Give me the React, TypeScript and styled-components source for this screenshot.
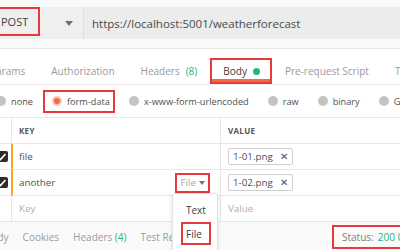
import React from 'react';
import styled, { createGlobalStyle } from 'styled-components';

const GlobalStyle = createGlobalStyle`
  html, body {
    margin: 0;
    padding: 0;
    background: #ffffff;
  }
  body {
    font-family: "Open Sans", "Liberation Sans", sans-serif;
    font-size: 10px;
    color: #505050;
  }
`;

const RED = '#e53a3f';
const GREEN = '#26b47f';
const ORANGE = '#f26b3a';

const Screen = styled.div`
  position: relative;
  width: 400px;
  height: 250px;
  overflow: hidden;
  background: #fff;
  white-space: nowrap;
`;

const TopSection = styled.div`
  padding: 7px 0 9px;
  background: #fafafa;
  border-bottom: 1px solid #e6e6e6;
`;

const RequestBar = styled.div`
  display: flex;
  height: 32px;
  background: #ececec;
`;

const MethodSelect = styled.div`
  width: 83px;
  display: flex;
  align-items: flex-start;
  justify-content: space-between;
  border-right: 1px solid #dcdcdc;
  background: #efefef;
`;

const MethodLabel = styled.span`
  margin-left: -10px;
  width: 50px;
  height: 29px;
  box-sizing: border-box;
  padding-left: 9px;
  display: flex;
  align-items: center;
  border: 2px solid ${RED};
  font-size: 11px;
  color: #404040;
`;

const Caret = styled.span`
  width: 0;
  height: 0;
  margin: 14px 10px 0 0;
  border-left: 4px solid transparent;
  border-right: 4px solid transparent;
  border-top: 5px solid #707070;
`;

const UrlInput = styled.div`
  flex: 1;
  display: flex;
  align-items: center;
  padding-left: 8px;
  font-size: 11.5px;
  color: #4a4a4a;
`;

const TabsRow = styled.div`
  display: flex;
  align-items: flex-end;
  height: 35px;
  margin-left: -23px;
  border-bottom: 1px solid #ebebeb;
`;

const Tab = styled.div<{ $active?: boolean; $marked?: boolean }>`
  display: flex;
  align-items: center;
  gap: 6px;
  height: 26px;
  box-sizing: border-box;
  padding: 0 ${({ $active }) => ($active ? 10 : 11)}px 0 11px;
  color: ${({ $active }) => ($active ? '#404040' : '#9a9a9a')};
  font-size: 10px;
  border: 2px solid ${({ $marked }) => ($marked ? RED : 'transparent')};
  box-shadow: ${({ $active }) => ($active ? `inset 0 -3px 0 ${ORANGE}` : 'none')};
`;

const Count = styled.span`
  color: ${GREEN};
`;

const Dot = styled.span`
  width: 7px;
  height: 7px;
  border-radius: 50%;
  background: ${GREEN};
`;

const RadioRow = styled.div`
  display: flex;
  align-items: center;
  height: 32px;
  margin-left: -13px;
`;

const RadioOption = styled.label<{ $marked?: boolean }>`
  display: flex;
  align-items: center;
  gap: 5px;
  height: 23px;
  box-sizing: border-box;
  padding: 0 3px 0 7px;
  margin-right: 5px;
  font-size: 9.2px;
  color: #505050;
  border: 2px solid ${({ $marked }) => ($marked ? RED : 'transparent')};
`;

const RadioDot = styled.span<{ $checked?: boolean }>`
  width: 10px;
  height: 10px;
  border-radius: 50%;
  box-sizing: border-box;
  background: ${({ $checked }) => ($checked ? ORANGE : '#c4c4c4')};
  border: ${({ $checked }) => ($checked ? '2px solid #f8c8b6' : 'none')};
`;

const Table = styled.div`
  display: grid;
  grid-template-columns: 17px 209px 1fr;
  margin-left: -6px;
  border-top: 1px solid #e6e6e6;
`;

const Cell = styled.div<{ $flag?: boolean }>`
  height: 26px;
  box-sizing: border-box;
  display: flex;
  align-items: center;
  border-bottom: 1px solid #e6e6e6;
  border-left: ${({ $flag }) => ($flag ? '2px solid #f5a623' : '1px solid #e6e6e6')};
  padding-left: ${({ $flag }) => ($flag ? '6px' : '7px')};
  font-size: 9.8px;
  color: #505050;
`;

const CheckCell = styled.div`
  height: 26px;
  box-sizing: border-box;
  display: flex;
  align-items: center;
  justify-content: center;
  border-bottom: 1px solid #e6e6e6;
`;

const HeadCell = styled(Cell)`
  font-size: 8px;
  font-weight: 700;
  letter-spacing: 0.3px;
  color: #555;
`;

const KeyCellInner = styled.div`
  flex: 1;
  display: flex;
  align-items: center;
  justify-content: space-between;
  padding-right: 10px;
`;

const Checkbox = styled.span`
  width: 11px;
  height: 11px;
  border-radius: 2px;
  background: #2c2c2c;
  display: flex;
  align-items: center;
  justify-content: center;
`;

const Placeholder = styled.span`
  color: #b0b0b0;
`;

const TypeSelect = styled.span`
  display: flex;
  align-items: center;
  gap: 3px;
  height: 20px;
  box-sizing: border-box;
  padding: 0 3px;
  border: 2px solid ${RED};
  color: #a8a8a8;
  font-size: 9.8px;
`;

const SmallCaret = styled.span`
  width: 0;
  height: 0;
  border-left: 3.5px solid transparent;
  border-right: 3.5px solid transparent;
  border-top: 4px solid #777;
`;

const FileChip = styled.span`
  display: flex;
  align-items: center;
  gap: 7px;
  height: 17px;
  box-sizing: border-box;
  padding: 0 4px;
  border: 1px solid #cfcfcf;
  border-radius: 2px;
  font-size: 9.8px;
  color: #505050;
`;

const FooterBar = styled.div`
  display: flex;
  align-items: center;
  justify-content: space-between;
  height: 29px;
  background: #fafafa;
  margin-left: -15px;
`;

const FooterTabs = styled.div`
  display: flex;
  gap: 14px;
  font-size: 10px;
  color: #9a9a9a;
`;

const StatusBox = styled.div`
  display: flex;
  align-items: center;
  gap: 4px;
  height: 24px;
  box-sizing: border-box;
  padding: 0 0 0 8px;
  width: 74px;
  margin-right: -6px;
  border: 2px solid ${RED};
  font-size: 10px;
  color: #808080;
  overflow: hidden;
`;

const Menu = styled.div`
  position: absolute;
  left: 172px;
  top: 193px;
  width: 46px;
  height: 66px;
  box-sizing: border-box;
  padding: 4px 0 0 8px;
  background: #fff;
  border: 1px solid #e2e2e2;
  border-radius: 3px;
  box-shadow: 0 1px 4px rgba(0, 0, 0, 0.12);
  display: flex;
  flex-direction: column;
  gap: 1px;
`;

const MenuItem = styled.div<{ $marked?: boolean }>`
  height: 23px;
  width: 30px;
  box-sizing: border-box;
  display: flex;
  align-items: center;
  padding-left: 3px;
  font-size: 10px;
  color: #404040;
  border: 2px solid ${({ $marked }) => ($marked ? RED : 'transparent')};
`;

const Tick = () => (
  <svg width="9" height="9" viewBox="0 0 9 9">
    <path d="M1.5 6.5 L2.5 7.5 L7.5 2" stroke="#fff" strokeWidth="1.6" fill="none" />
  </svg>
);

const App: React.FC = () => {
  return (
    <Screen>
      <GlobalStyle />
      <TopSection>
        <RequestBar>
          <MethodSelect>
            <MethodLabel>POST</MethodLabel>
            <Caret />
          </MethodSelect>
          <UrlInput>https://localhost:5001/weatherforecast</UrlInput>
        </RequestBar>
      </TopSection>

      <TabsRow>
        <Tab>Params</Tab>
        <Tab>Authorization</Tab>
        <Tab>
          Headers <Count>(8)</Count>
        </Tab>
        <Tab $active $marked>
          Body <Dot />
        </Tab>
        <Tab>Pre-request Script</Tab>
        <Tab>Tests</Tab>
      </TabsRow>

      <RadioRow>
        <RadioOption>
          <RadioDot />
          none
        </RadioOption>
        <RadioOption $marked>
          <RadioDot $checked />
          form-data
        </RadioOption>
        <RadioOption>
          <RadioDot />
          x-www-form-urlencoded
        </RadioOption>
        <RadioOption>
          <RadioDot />
          raw
        </RadioOption>
        <RadioOption>
          <RadioDot />
          binary
        </RadioOption>
        <RadioOption>
          <RadioDot />
          GraphQL
        </RadioOption>
      </RadioRow>

      <Table>
        <CheckCell />
        <HeadCell>KEY</HeadCell>
        <HeadCell>VALUE</HeadCell>

        <CheckCell>
          <Checkbox>
            <Tick />
          </Checkbox>
        </CheckCell>
        <Cell $flag>file</Cell>
        <Cell>
          <FileChip>
            1-01.png <span>✕</span>
          </FileChip>
        </Cell>

        <CheckCell>
          <Checkbox>
            <Tick />
          </Checkbox>
        </CheckCell>
        <Cell $flag>
          <KeyCellInner>
            another
            <TypeSelect>
              File <SmallCaret />
            </TypeSelect>
          </KeyCellInner>
        </Cell>
        <Cell>
          <FileChip>
            1-02.png <span>✕</span>
          </FileChip>
        </Cell>

        <CheckCell />
        <Cell>
          <Placeholder>Key</Placeholder>
        </Cell>
        <Cell>
          <Placeholder>Value</Placeholder>
        </Cell>
      </Table>

      <FooterBar>
        <FooterTabs>
          <span>Body</span>
          <span>Cookies</span>
          <span>
            Headers <Count>(4)</Count>
          </span>
          <span>Test Results</span>
        </FooterTabs>
        <StatusBox>
          Status: <Count>200 OK</Count>
        </StatusBox>
      </FooterBar>

      <Menu>
        <MenuItem>Text</MenuItem>
        <MenuItem $marked>File</MenuItem>
      </Menu>
    </Screen>
  );
};

export default App;
